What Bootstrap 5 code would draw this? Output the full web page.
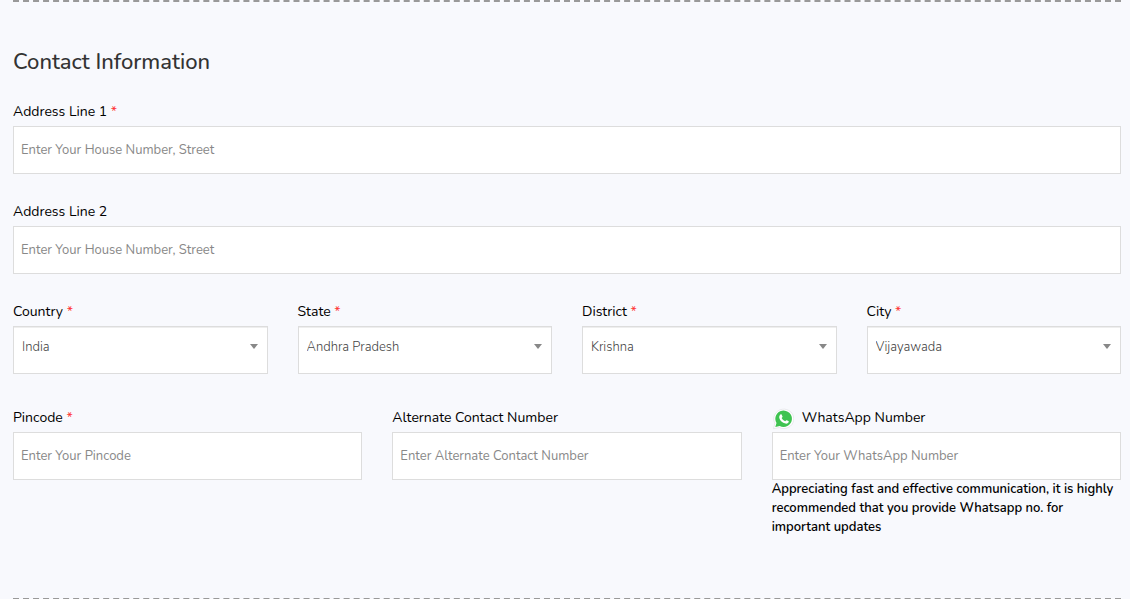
<!DOCTYPE html>
<html lang="en">
<head>
<meta charset="utf-8">
<meta name="viewport" content="width=device-width, initial-scale=1">
<title>Contact Information</title>
<link href="https://cdn.jsdelivr.net/npm/bootstrap@5.3.0/dist/css/bootstrap.min.css" rel="stylesheet">
<style>
  body { font-family: Nunito, Lato, sans-serif; font-size: 14px; line-height: 22px; color: #000; background: #f8f9fd; }
  .contact-section { padding: 46px 0 61px; margin: 0 9px 0 13px; border-top: 2px dashed #999; border-bottom: 2px dashed #999; }
  .section-title { font-size: 22px; line-height: 28px; font-weight: 500; color: #333; margin-bottom: 24px; }
  .form-grid { --bs-gutter-x: 30px; }
  .form-label { line-height: 24px; margin-bottom: 2px; }
  .required { color: #f33; }
  .form-control, .form-select { height: 48px; font-size: 13px; line-height: 20px; border: 1px solid #ddd; border-radius: 0; background-color: #fff; }
  .form-control { padding: 13px 7px; color: #555; }
  .form-control::placeholder { color: #888; }
  .form-select { padding: 10px 30px 16px 8px; font-weight: 300; color: #444; box-shadow: inset 0 1px 0 #eee;
    background-image: url("data:image/svg+xml,%3Csvg xmlns='http://www.w3.org/2000/svg' viewBox='0 0 8 5'%3E%3Cpath fill='%23888' d='M0 0h8L4 5z'/%3E%3C/svg%3E");
    background-size: 8px 5px; background-position: right 9px top 17px; }
  .whatsapp-note { font-size: 13px; line-height: 19px; font-weight: 600; }
  .field-row { margin-bottom: 26px; }
  .select-row { margin-bottom: 32px; }
</style>
</head>
<body>
<main class="vh-100 overflow-hidden">
  <form class="contact-section">
    <h2 class="section-title">Contact Information</h2>
    <div class="field-row">
      <label class="form-label d-block" for="address1">Address Line 1 <span class="required">*</span></label>
      <input class="form-control" id="address1" type="text" placeholder="Enter Your House Number, Street" required>
    </div>
    <div class="field-row">
      <label class="form-label d-block" for="address2">Address Line 2</label>
      <input class="form-control" id="address2" type="text" placeholder="Enter Your House Number, Street">
    </div>
    <div class="row form-grid select-row">
      <div class="col-3">
        <label class="form-label d-block" for="country">Country <span class="required">*</span></label>
        <select class="form-select" id="country"><option>India</option></select>
      </div>
      <div class="col-3">
        <label class="form-label d-block" for="state">State <span class="required">*</span></label>
        <select class="form-select" id="state"><option>Andhra Pradesh</option></select>
      </div>
      <div class="col-3">
        <label class="form-label d-block" for="district">District <span class="required">*</span></label>
        <select class="form-select" id="district"><option>Krishna</option></select>
      </div>
      <div class="col-3">
        <label class="form-label d-block" for="city">City <span class="required">*</span></label>
        <select class="form-select" id="city"><option>Vijayawada</option></select>
      </div>
    </div>
    <div class="row form-grid">
      <div class="col-4">
        <label class="form-label d-block" for="pincode">Pincode <span class="required">*</span></label>
        <input class="form-control" id="pincode" type="text" placeholder="Enter Your Pincode" required>
      </div>
      <div class="col-4">
        <label class="form-label d-block" for="alternate">Alternate Contact Number</label>
        <input class="form-control" id="alternate" type="tel" placeholder="Enter Alternate Contact Number">
      </div>
      <div class="col-4">
        <label class="form-label d-flex" for="whatsapp">
          <svg class="flex-shrink-0 me-2" width="22" height="24" viewBox="0 0 22 24" aria-hidden="true">
            <path d="M1.500 22.700 2.900 17.300A10 9.700 0 1 1 7.300 21.500Z" fill="#fff" stroke="#dfe1e5" stroke-width=".7"/>
            <path d="M3.300 21 4.500 17A8.300 8.200 0 1 1 7.700 20Z" fill="#3fc351"/>
            <path d="M8.400 8.600c.4-.5 1-.5 1.300.1l.8 1.900c.2.500-.5 1-.9 1.500.8 1.500 1.900 2.500 3.500 3.200.5-.4 1-1.300 1.500-1.100l1.900.9c.4.200.3.700.1 1.200-.6 1.200-1.900 1.600-3.100 1.300-3.300-.8-5.400-2.700-6.200-5.600-.3-1.300.2-2.600 1.100-3.400Z" fill="#fff"/>
          </svg>
          WhatsApp Number
        </label>
        <input class="form-control" id="whatsapp" type="tel" placeholder="Enter Your WhatsApp Number" aria-describedby="whatsapp-note">
        <p class="whatsapp-note mb-0" id="whatsapp-note">Appreciating fast and effective communication, it is highly recommended that you provide Whatsapp no. for important updates</p>
      </div>
    </div>
  </form>
</main>
<script src="https://cdn.jsdelivr.net/npm/bootstrap@5.3.0/dist/js/bootstrap.bundle.min.js"></script>
</body>
</html>
